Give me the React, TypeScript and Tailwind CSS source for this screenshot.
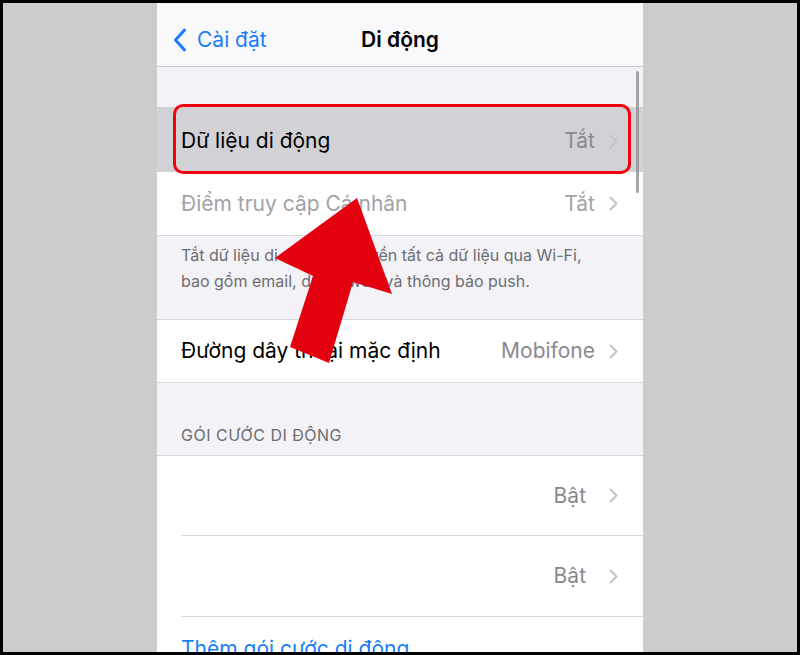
const font = { fontFamily: "Inter, 'Noto Sans', 'Liberation Sans', sans-serif" };

function Chevron() {
  return (
    <svg width="9" height="15" viewBox="0 0 9 15" className="ml-[14px] shrink-0">
      <path d="M1.5 1.5 L7.5 7.5 L1.5 13.5" fill="none" stroke="#c4c4c7" strokeWidth="2" strokeLinecap="round" strokeLinejoin="round" />
    </svg>
  );
}

function Row({
  label,
  value,
  muted,
  wide,
  className = "",
}: {
  label?: string;
  value: string;
  muted?: boolean;
  wide?: boolean;
  className?: string;
}) {
  return (
    <div className={`flex items-center pr-[25px] ${className}`}>
      <span className={`flex-1 text-[21px] ${muted ? "text-[#a2a2a6]" : "text-black"}`}>{label}</span>
      <span className={`text-[21px] ${wide ? "mr-[9px]" : ""} ${muted ? "text-[#a2a2a6]" : "text-[#8a8a8e]"}`}>{value}</span>
      <Chevron />
    </div>
  );
}

export default function App() {
  return (
    <div className="w-[800px] h-[655px] bg-black p-[3px]" style={font}>
      <div className="flex h-full bg-[#cccccc]">
        <div className="w-[154px]" />
        <div className="relative w-[486px] h-full overflow-hidden bg-[#f2f2f7]">
          {/* nav bar */}
          <div className="relative flex items-center h-[64px] pt-[10px] bg-[#f9f9fb] border-b border-[#c8c8cc]">
            <div className="flex items-center pl-[16px] text-[#1a7ef8]">
              <svg width="14" height="24" viewBox="0 0 14 24">
                <path d="M11.5 2 L2.5 12 L11.5 22" fill="none" stroke="#1a7ef8" strokeWidth="3" strokeLinecap="round" strokeLinejoin="round" />
              </svg>
              <span className="ml-[10px] text-[21px]">Cài đặt</span>
            </div>
            <div className="absolute inset-0 pt-[10px] flex items-center justify-center pointer-events-none">
              <span className="text-[21px] font-semibold text-black">Di động</span>
            </div>
          </div>

          <div className="h-[40px]" />

          <div className="bg-white">
            <Row label="Dữ liệu di động" value="Tắt" className="h-[65px] pl-[24px] pt-[3px] bg-[#d1d1d6]" />
            <Row label="Điểm truy cập Cá nhân" value="Tắt" muted className="h-[63px] pl-[24px]" />
          </div>
          <div className="border-t border-[#d8d8dc] pl-[24px] pr-[30px] pt-[6px] h-[84px] text-[16px] leading-[26px] text-[#6d6d72]">
            Tắt dữ liệu di động để truyền tất cả dữ liệu qua Wi-Fi,
            <br />
            bao gồm email, duyệt web và thông báo push.
          </div>

          <div className="bg-white border-t border-[#d8d8dc]">
            <Row label="Đường dây thoại mặc định" value="Mobifone" className="h-[62px] pl-[24px]" />
          </div>

          <div className="flex items-end h-[73px] pl-[24px] pb-[8px] border-t border-[#d8d8dc] text-[16px] tracking-[0.5px] text-[#6d6d72]">
            GÓI CƯỚC DI ĐỘNG
          </div>

          <div className="bg-white border-t border-[#d8d8dc] pl-[24px]">
            <Row value="Bật" wide className="h-[80px] border-b border-[#d8d8dc]" />
            <Row value="Bật" wide className="h-[81px] border-b border-[#d8d8dc]" />
            <div className="flex items-center h-[64px] text-[21px] text-[#1a7ef8]">Thêm gói cước di động</div>
          </div>

          {/* scroll indicator */}
          <div className="absolute left-[479px] top-[68px] w-[3px] h-[122px] rounded-full bg-[#8e8e93]/80" />

          {/* annotation box */}
          <div className="absolute left-[16px] top-[101px] w-[458px] h-[70px] rounded-[10px] border-[3px] border-[#f2000d]" />

          {/* annotation arrow */}
          <svg className="absolute left-0 top-0" width="486" height="652" viewBox="157 3 486 652">
            <polygon
              points="357,198 392,294 353,282 329,363 290,347 313,276 275,258"
              fill="#e3000f"
            />
          </svg>
        </div>
        <div className="flex-1" />
      </div>
    </div>
  );
}
